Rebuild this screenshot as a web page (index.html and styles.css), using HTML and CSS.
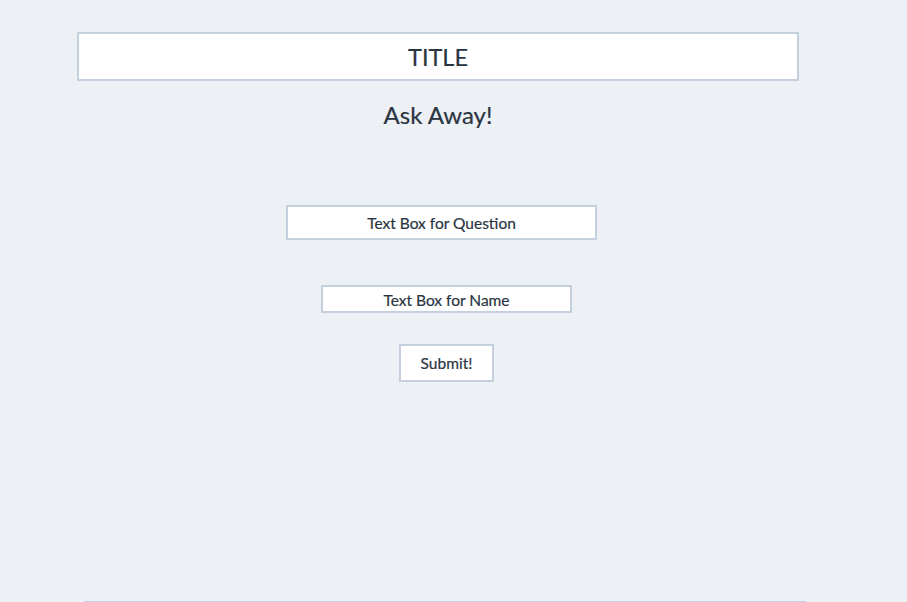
FILE: index.html
```html
<!DOCTYPE html>
<html>
<head>
<meta charset="utf-8">
<link rel="stylesheet" href="styles.css">
</head>
<body>
<div class="page">
  <div class="title-box">TITLE</div>
  <h1 class="heading">Ask Away!</h1>
  <div class="field field-question">Text Box for Question</div>
  <div class="field field-name">Text Box for Name</div>
  <div class="submit">Submit!</div>
  <div class="footer-box"></div>
</div>
</body>
</html>
```
FILE: styles.css
```css
html, body {
  margin: 0;
  padding: 0;
  background: #edf0f5;
  height: 100%;
  overflow: hidden;
}
.page {
  display: flex;
  flex-direction: column;
  align-items: flex-start;
  font-family: Lato, "Open Sans", sans-serif;
  color: #2a3542;
  padding-top: 32px;
}
.title-box {
  box-sizing: border-box;
  margin-left: 77px;
  width: 722px;
  height: 49px;
  border: 2px solid #c4d0de;
  background: #fff;
  display: flex;
  align-items: center;
  justify-content: center;
  font-size: 23.5px;
  -webkit-text-stroke: 0.2px #2a3542;
}
.heading {
  margin: 18px 0 0 0;
  width: 876px;
  text-align: center;
  font-size: 24px;
  font-weight: 400;
  line-height: 32px;
  -webkit-text-stroke: 0.2px #2a3542;
}
.field {
  box-sizing: border-box;
  border: 2px solid #c4d0de;
  background: #fff;
  display: flex;
  align-items: center;
  justify-content: center;
  font-size: 15.5px;
  -webkit-text-stroke: 0.2px #2a3542;
}
.field-question {
  margin: 74px 0 0 286px;
  width: 311px;
  height: 35px;
}
.field-name {
  margin: 45px 0 0 321px;
  width: 251px;
  height: 28px;
  padding-top: 2px;
}
.submit {
  box-sizing: border-box;
  margin: 31px 0 0 399px;
  width: 95px;
  height: 38px;
  border: 2px solid #c4d0de;
  background: #fff;
  display: flex;
  align-items: center;
  justify-content: center;
  font-size: 15.5px;
  -webkit-text-stroke: 0.2px #2a3542;
}
.footer-box {
  box-sizing: border-box;
  margin: 219px 0 0 84px;
  width: 722px;
  height: 1px;
  border-top: 1px solid #c4d0de;
}
```
